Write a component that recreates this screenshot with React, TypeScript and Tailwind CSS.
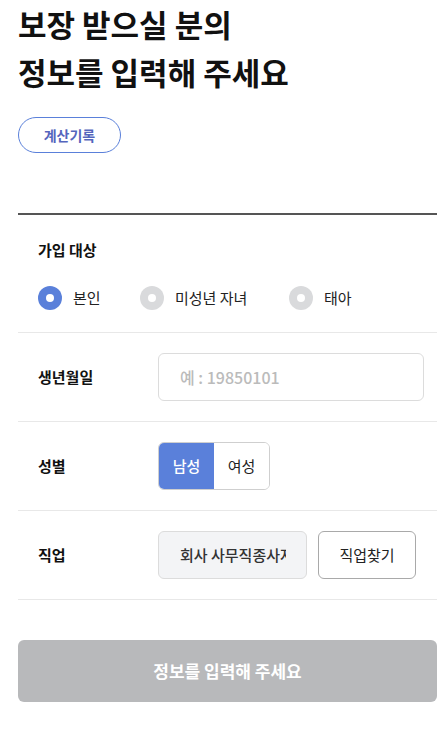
import React from "react";

const font = { fontFamily: '"Noto Sans CJK KR", "Noto Sans", sans-serif' };

const Radio: React.FC<{ label: string; checked?: boolean }> = ({ label, checked }) => (
  <label className="flex items-center gap-[11px]">
    <span
      className={`flex h-6 w-6 items-center justify-center rounded-full ${
        checked ? "bg-[#5a80da]" : "bg-[#d9dadc]"
      }`}
    >
      <span className="h-2 w-2 rounded-full bg-white" />
    </span>
    <span className="text-[15px] text-[#222]">{label}</span>
  </label>
);

export default function App() {
  return (
    <div className="w-[444px] bg-white text-[#111]" style={font}>
      <div className="w-[419px] pl-[18px] box-content">
        <h1 className="text-[31px] font-bold leading-[48px] text-[#111]">
          보장 받으실 분의
          <br />
          정보를 입력해 주세요
        </h1>

        <button className="mt-[21px] h-9 w-[103px] rounded-full border border-[#5a80da] text-[14px] font-semibold text-[#5565bd]">
          계산기록
        </button>

        <div className="mt-[60px] h-[2px] bg-[#555]" />

        <section className="border-b border-[#e8e8e8] px-5 pt-[25px] pb-[22px]">
          <h2 className="text-[15px] font-bold leading-5">가입 대상</h2>
          <div className="mt-[26px] flex items-center">
            <div className="w-[102px]">
              <Radio label="본인" checked />
            </div>
            <div className="w-[149px]">
              <Radio label="미성년 자녀" />
            </div>
            <Radio label="태아" />
          </div>
        </section>

        <div className="flex items-center border-b border-[#e8e8e8] py-5">
          <span className="w-[140px] pl-5 text-[15px] font-bold">생년월일</span>
          <input
            className="h-12 w-[266px] rounded-md border border-[#dcdcdc] px-[21px] text-[16px] font-medium outline-none placeholder:text-[#bbb]"
            placeholder="예 : 19850101"
          />
        </div>

        <div className="flex items-center border-b border-[#e8e8e8] py-5">
          <span className="w-[140px] pl-5 text-[15px] font-bold">성별</span>
          <div className="flex h-12 overflow-hidden rounded-md border border-[#cfcfcf]">
            <button className="w-[55px] bg-[#5a80da] text-[15px] font-medium text-white">남성</button>
            <button className="w-[55px] bg-white text-[15px] text-[#222]">여성</button>
          </div>
        </div>

        <div className="flex items-center border-b border-[#e8e8e8] py-5">
          <span className="w-[140px] pl-5 text-[15px] font-bold">직업</span>
          <div className="flex h-12 w-[149px] items-center overflow-hidden rounded-md border border-[#dcdcdc] bg-[#f3f4f6] pl-[21px] pr-5">
            <span className="overflow-hidden whitespace-nowrap text-[15px] font-medium text-[#333]">회사 사무직종사자</span>
          </div>
          <button className="ml-[11px] h-12 w-[98px] rounded-md border border-[#a9a9a9] bg-white text-[15px] text-[#222]">
            직업찾기
          </button>
        </div>

        <button className="mt-[40px] h-[62px] w-full rounded-md bg-[#b8b9bb] text-[17px] font-bold text-white">
          정보를 입력해 주세요
        </button>
        <div className="h-[31px]" />
      </div>
    </div>
  );
}
